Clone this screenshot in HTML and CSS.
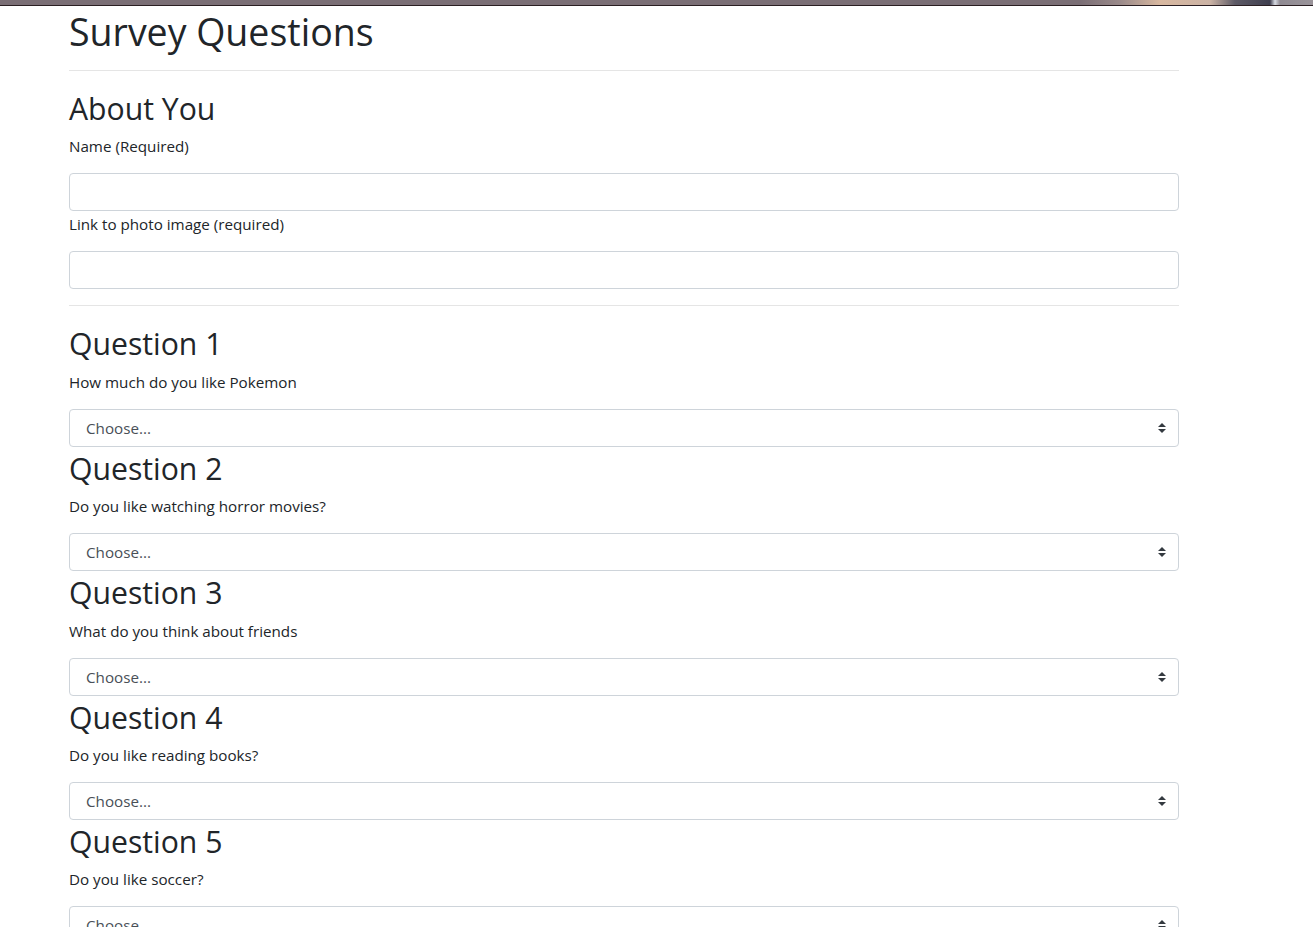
FILE: index.html
```html
<!DOCTYPE html>
<html lang="en">
<head>
<meta charset="utf-8">
<title>Survey Questions</title>
<link rel="stylesheet" href="styles.css">
</head>
<body>
<div class="banner"></div>
<main class="container">
  <h1 class="title">Survey Questions</h1>
  <hr class="rule">
  <section class="group">
    <h2 class="heading">About You</h2>
    <label class="label" for="name">Name (Required)</label>
    <input class="field" id="name" type="text">
    <label class="label" for="photo">Link to photo image (required)</label>
    <input class="field" id="photo" type="text">
  </section>
  <hr class="rule">
  <section class="question">
    <h2 class="heading">Question 1</h2>
    <label class="label" for="q1">How much do you like Pokemon</label>
    <div class="select" id="q1"><span class="select-text">Choose...</span><svg class="arrow" width="8" height="10" viewBox="0 0 4 5"><path fill="#343a40" d="M2 0L0 2h4zm0 5L0 3h4z"/></svg></div>
  </section>
  <section class="question">
    <h2 class="heading">Question 2</h2>
    <label class="label" for="q2">Do you like watching horror movies?</label>
    <div class="select" id="q2"><span class="select-text">Choose...</span><svg class="arrow" width="8" height="10" viewBox="0 0 4 5"><path fill="#343a40" d="M2 0L0 2h4zm0 5L0 3h4z"/></svg></div>
  </section>
  <section class="question">
    <h2 class="heading">Question 3</h2>
    <label class="label" for="q3">What do you think about friends</label>
    <div class="select" id="q3"><span class="select-text">Choose...</span><svg class="arrow" width="8" height="10" viewBox="0 0 4 5"><path fill="#343a40" d="M2 0L0 2h4zm0 5L0 3h4z"/></svg></div>
  </section>
  <section class="question">
    <h2 class="heading">Question 4</h2>
    <label class="label" for="q4">Do you like reading books?</label>
    <div class="select" id="q4"><span class="select-text">Choose...</span><svg class="arrow" width="8" height="10" viewBox="0 0 4 5"><path fill="#343a40" d="M2 0L0 2h4zm0 5L0 3h4z"/></svg></div>
  </section>
  <section class="question">
    <h2 class="heading">Question 5</h2>
    <label class="label" for="q5">Do you like soccer?</label>
    <div class="select" id="q5"><span class="select-text">Choose...</span><svg class="arrow" width="8" height="10" viewBox="0 0 4 5"><path fill="#343a40" d="M2 0L0 2h4zm0 5L0 3h4z"/></svg></div>
  </section>
</main>
</body>
</html>
```
FILE: styles.css
```css
html, body {
  margin: 0;
  padding: 0;
  background: #fff;
}
body {
  font-family: "Open Sans", "Noto Sans", "Liberation Sans", sans-serif;
  font-size: 15.2px;
  line-height: 24px;
  color: #212529;
  overflow: hidden;
  height: 927px;
}
.banner {
  height: 5px;
  border-bottom: 1px solid #2a1e22;
  background: linear-gradient(90deg, #7a6e75 0, #7a6e75 1080px, #9a8a8a 1120px, #d8b8a0 1160px, #cbb3a5 1210px, #5d5a66 1235px, #3f3f4f 1270px, #d8dce4 1275px, #8f8a92 1280px, #9a949a 1313px);
}
.container {
  width: 1110px;
  margin-left: 69px;
}
.title {
  margin: 0 0 -4px;
  font-size: 37.5px;
  line-height: 52px;
  font-weight: 400;
}
.rule {
  margin: 16px 0;
  border: 0;
  border-top: 1px solid rgba(0, 0, 0, 0.1);
  height: 0;
}
.heading {
  margin: 0 0 3px;
  font-size: 30.2px;
  line-height: 43.4px;
  font-weight: 400;
}
.label {
  display: block;
  margin-bottom: 15px;
  padding-top: 1px;
  line-height: 24px;
}
.field {
  display: block;
  box-sizing: border-box;
  width: 100%;
  height: 38px;
  margin: 0;
  padding: 6px 12px;
  border: 1px solid #ced4da;
  border-radius: 4px;
  background: #fff;
  font: inherit;
}
.select {
  box-sizing: border-box;
  height: 38px;
  padding: 0 12px 0 16px;
  border: 1px solid #ced4da;
  border-radius: 4px;
  background: #fff;
  display: flex;
  align-items: center;
  justify-content: space-between;
  color: #495057;
}
.select-text {
  line-height: 24px;
}
.arrow {
  display: block;
}
```
